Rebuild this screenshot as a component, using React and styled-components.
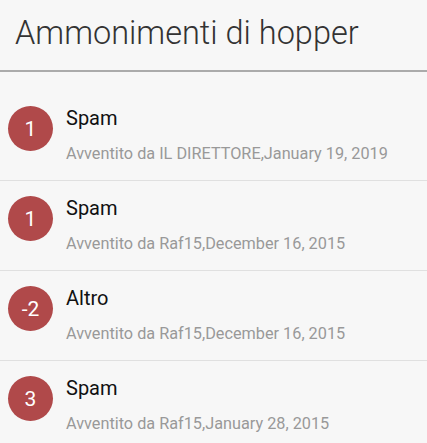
import React from "react";
import styled, { createGlobalStyle } from "styled-components";

const GlobalStyle = createGlobalStyle`
  body {
    margin: 0;
    background: #f7f7f7;
    font-family: Roboto, "Liberation Sans", sans-serif;
  }
`;

const warnings = [
  { points: 1, reason: "Spam", by: "IL DIRETTORE", date: "January 19, 2019" },
  { points: 1, reason: "Spam", by: "Raf15", date: "December 16, 2015" },
  { points: -2, reason: "Altro", by: "Raf15", date: "December 16, 2015" },
  { points: 3, reason: "Spam", by: "Raf15", date: "January 28, 2015" },
];

const App = () => (
  <>
    <GlobalStyle />
    <Page>
      <Header>
        <Title>Ammonimenti di hopper</Title>
      </Header>
      <List>
        {warnings.map((w, i) => (
          <Row key={i}>
            <Badge>{w.points}</Badge>
            <Info>
              <Reason>{w.reason}</Reason>
              <Meta>
                Avventito da {w.by},{w.date}
              </Meta>
            </Info>
          </Row>
        ))}
      </List>
    </Page>
  </>
);

export default App;

const Page = styled.div`
  width: 427px;
  min-height: 443px;
  background: #f7f7f7;
`;

const Header = styled.div`
  height: 72px;
  box-sizing: border-box;
  padding: 13px 15px 0;
  border-bottom: 2px solid #ababab;
`;

const Title = styled.h1`
  margin: 0;
  font-size: 32.5px;
  font-weight: 300;
  line-height: 40px;
  color: #333;
`;

const List = styled.div`
  padding-top: 19px;
`;

const Row = styled.div`
  display: flex;
  align-items: flex-start;
  gap: 13px;
  height: 90px;
  box-sizing: border-box;
  padding: 15px 0 0 8px;
  border-bottom: 1px solid #e0e0e0;
`;

const Badge = styled.div`
  flex: none;
  width: 45px;
  height: 45px;
  border-radius: 50%;
  background: #b0494a;
  color: #fff;
  display: flex;
  align-items: center;
  justify-content: center;
  font-size: 21px;
`;

const Info = styled.div`
  display: flex;
  flex-direction: column;
  gap: 14px;
`;

const Reason = styled.div`
  font-size: 20px;
  line-height: 24px;
  color: #111;
`;

const Meta = styled.div`
  font-size: 16.25px;
  line-height: 20px;
  color: #999;
`;
